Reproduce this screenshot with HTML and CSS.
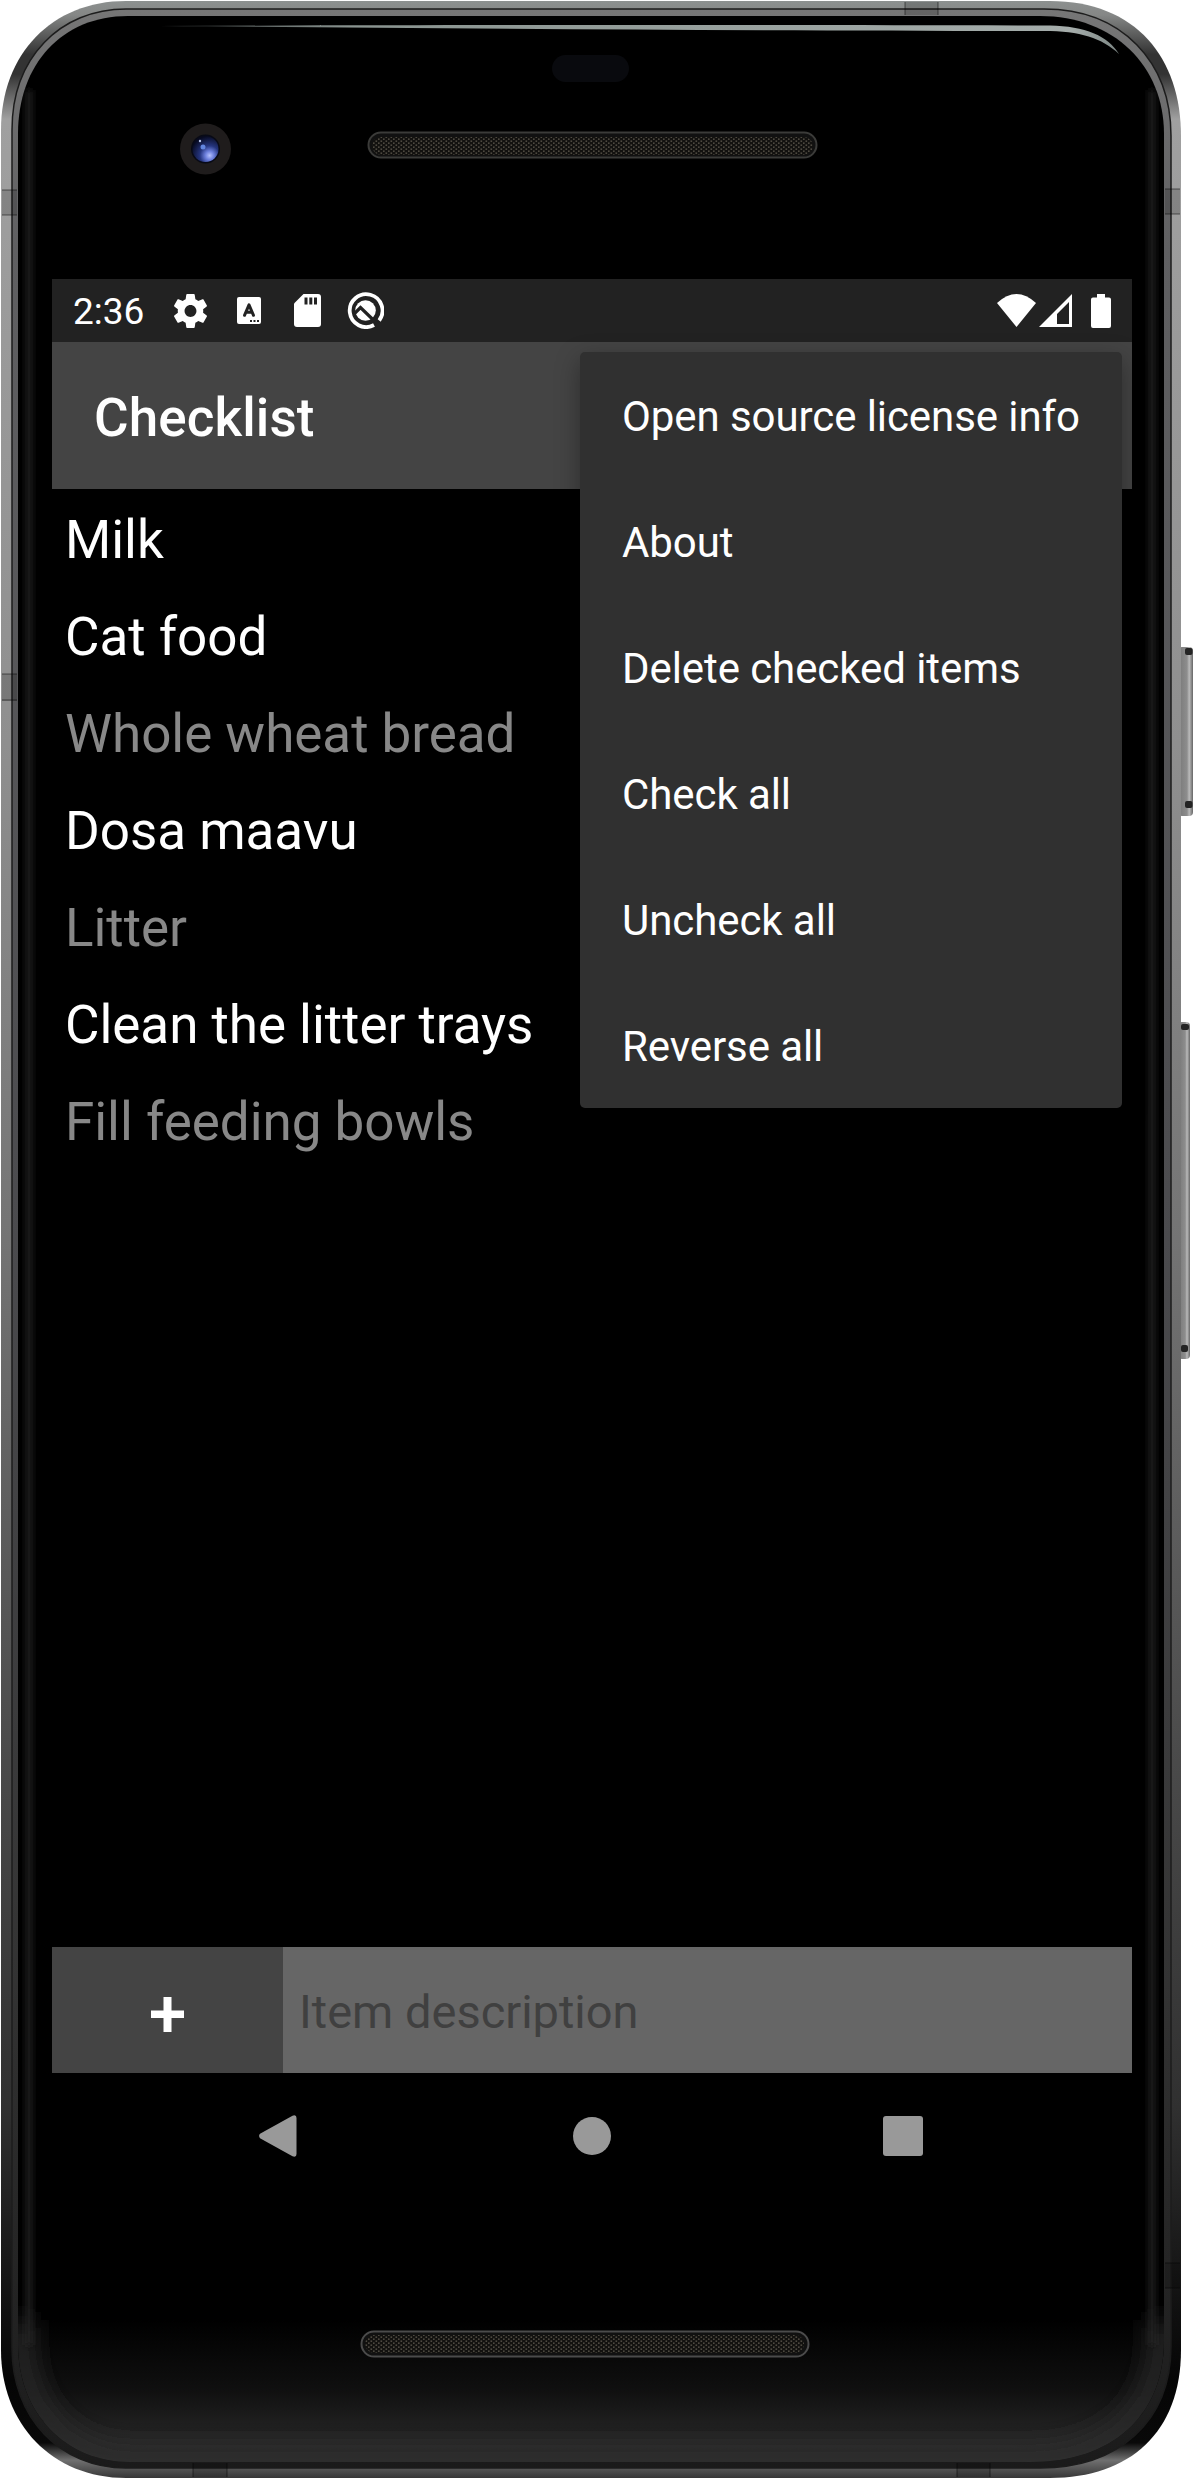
FILE: index.html
```html
<!DOCTYPE html>
<html lang="en">
<head>
<meta charset="utf-8">
<title>Checklist</title>
<link rel="stylesheet" href="styles.css">
</head>
<body>
<div class="stage">
  <svg class="device" width="1194" height="2480" viewBox="0 0 1194 2480" aria-hidden="true">
    <defs>
      <linearGradient id="rim" gradientUnits="userSpaceOnUse" x1="0" y1="0" x2="0" y2="2480">
        <stop offset="0" stop-color="#8d9190"/><stop offset=".006" stop-color="#858786"/>
        <stop offset=".022" stop-color="#333"/><stop offset=".03" stop-color="#333"/>
        <stop offset=".048" stop-color="#a0a0a0"/><stop offset=".3" stop-color="#8f8f8f"/>
        <stop offset=".5" stop-color="#747474"/><stop offset=".7" stop-color="#4c4c4c"/>
        <stop offset=".85" stop-color="#303030"/><stop offset=".96" stop-color="#050505"/>
        <stop offset=".985" stop-color="#090909"/><stop offset=".992" stop-color="#707070"/>
        <stop offset="1" stop-color="#303030"/>
      </linearGradient>
      <linearGradient id="inner" gradientUnits="userSpaceOnUse" x1="0" y1="0" x2="0" y2="2480">
        <stop offset="0" stop-color="#777"/><stop offset=".1" stop-color="#606062"/>
        <stop offset=".5" stop-color="#4b4b4e"/><stop offset=".8" stop-color="#333"/>
        <stop offset="1" stop-color="#1a1a1a"/>
      </linearGradient>
      <linearGradient id="foot" x1="0" y1="0" x2="0" y2="1">
        <stop offset="0" stop-color="#000"/><stop offset=".5" stop-color="#101010"/>
        <stop offset="1" stop-color="#303030"/>
      </linearGradient>
      <linearGradient id="shine" x1="0" y1="0" x2="1" y2="0">
        <stop offset="0" stop-color="#7b8585" stop-opacity=".5"/><stop offset=".2" stop-color="#89938f"/>
        <stop offset=".95" stop-color="#a5adab"/><stop offset="1" stop-color="#7d8785"/>
      </linearGradient>
      <linearGradient id="key" x1="0" y1="0" x2="1" y2="0">
        <stop offset="0" stop-color="#777"/><stop offset=".6" stop-color="#8d8d8d"/>
        <stop offset=".75" stop-color="#bbb"/><stop offset="1" stop-color="#666"/>
      </linearGradient>
      <radialGradient id="lens" cx=".66" cy=".75" r=".75">
        <stop offset="0" stop-color="#b6c2ff"/><stop offset=".22" stop-color="#6d80dd"/>
        <stop offset=".5" stop-color="#25357f"/><stop offset="1" stop-color="#070a20"/>
      </radialGradient>
      <pattern id="mesh" width="5" height="4" patternUnits="userSpaceOnUse">
        <rect width="5" height="4" fill="#12110f"/>
        <rect x=".5" y=".5" width="1.6" height="1.3" fill="#5b564c"/>
        <rect x="3" y="2.5" width="1.6" height="1.3" fill="#5b564c"/>
      </pattern>
      <clipPath id="glass"><path d="M128 16H1040C1114 16 1164 66 1164 134V2340C1164 2416 1112 2462 1030 2462H130C66 2462 18 2414 18 2344V134C18 64 62 16 128 16Z"/></clipPath>
      <filter id="soft" filterUnits="userSpaceOnUse" x="0" y="60" width="1194" height="2420"><feGaussianBlur stdDeviation="3"/></filter>
      <filter id="glow" filterUnits="userSpaceOnUse" x="0" y="2200" width="1194" height="280"><feGaussianBlur stdDeviation="12"/></filter>
    </defs>

    <rect x="1178" y="647" width="15" height="169" rx="4" fill="url(#key)"/>
    <rect x="1185" y="648" width="7.500" height="7" rx="2" fill="#242424"/>
    <rect x="1185" y="801" width="7.500" height="7" rx="2" fill="#242424"/>
    <rect x="1178" y="1022" width="12" height="337" rx="4" fill="url(#key)"/>
    <rect x="1181" y="1024" width="8" height="6" rx="2" fill="#242424"/>
    <rect x="1181" y="1345" width="7" height="7" rx="2" fill="#242424"/>

    <path d="M126 1H1050C1136 1 1181 58 1181 136V2350C1181 2432 1130 2478 1050 2478H126C52 2478 1 2424 1 2350V130C1 54 52 1 126 1Z" fill="url(#rim)"/>
    <path d="M126 9H1044C1122 9 1171 62 1171 136V2346C1171 2422 1118 2468 1040 2468H126C60 2468 12 2418 12 2348V130C12 58 60 9 126 9Z" fill="url(#inner)" stroke="#1c1c1c" stroke-width="1.500"/>
    <path d="M128 16H1040C1114 16 1164 66 1164 134V2340C1164 2416 1112 2462 1030 2462H130C66 2462 18 2414 18 2344V134C18 64 62 16 128 16Z" fill="#000"/>
    <g clip-path="url(#glass)">
      <rect y="2320" width="1194" height="142" fill="url(#foot)"/>
      <path d="M22 2320V2340C22 2410 70 2458 130 2458H1030C1110 2458 1160 2410 1160 2340V2320" fill="none" stroke="#2c2c2c" stroke-width="22" filter="url(#glow)"/>
      <path d="M29 90V2345M1152 90V2345" fill="none" stroke="#222" stroke-width="6" filter="url(#soft)"/>
    </g>

    <path d="M160 26C500 24.500 800 25 1050 25.500C1085 26 1108 36 1119 54C1102 38 1080 31 1044 31C760 31 400 28 160 26Z" fill="url(#shine)"/>

    <path d="M2 190H17V215H2ZM2 674H17V701H2ZM1165 189H1180V214H1165ZM1165 2263H1180V2288H1165ZM905 2V15H938V2ZM193 2463H227V2477H193ZM957 2463H990V2477H957Z" fill="#000" fill-opacity=".16"/>
    <path d="M2 190H17M2 215H17M2 674H17M2 700H17M1165 189H1180M1165 214H1180M1165 2263H1180M1165 2288H1180M905 2V15M938 2V15M193 2463V2477M227 2463V2477M957 2463V2477M990 2463V2477" stroke="#000" stroke-opacity=".5" fill="none"/>

    <rect x="552" y="55" width="77" height="27" rx="13.500" fill="#090a0e"/>
    <circle cx="205.500" cy="149" r="25.500" fill="#1f1c1c"/>
    <circle cx="205.500" cy="149" r="14.500" fill="#080a16"/>
    <circle cx="205.500" cy="149" r="13" fill="url(#lens)"/>
    <circle cx="203" cy="147" r="2.500" fill="#6386df"/>
    <circle cx="200" cy="141" r="1.200" fill="#b5c2e8"/>

    <rect x="368.500" y="132.500" width="448" height="25" rx="12.500" fill="#111" stroke="#3b3b39" stroke-width="2"/>
    <rect x="372" y="137" width="441" height="18" rx="9" fill="url(#mesh)"/>
    <rect x="361.500" y="2331.500" width="447" height="25" rx="12.500" fill="#111" stroke="#4b4b4b" stroke-width="2"/>
    <rect x="365" y="2335" width="439" height="18" rx="9" fill="url(#mesh)"/>
  </svg>

  <main class="screen">
    <header class="status">
      <time class="clock">2:36</time>
      <div class="notes">
        <svg width="33" height="34" viewBox="2.270 2 19.460 20" preserveAspectRatio="none"><path fill="#fff" d="M19.430 12.980c.04-.32.07-.64.07-.98s-.03-.66-.07-.98l2.110-1.650c.19-.15.24-.42.12-.64l-2-3.460c-.12-.22-.39-.3-.61-.22l-2.490 1c-.52-.4-1.080-.73-1.690-.98l-.38-2.650C14.460 2.180 14.250 2 14 2h-4c-.25 0-.46.18-.49.42l-.38 2.650c-.61.25-1.170.59-1.690.98l-2.490-1c-.23-.09-.49 0-.61.22l-2 3.460c-.13.22-.07.49.12.64l2.110 1.650c-.04.32-.07.65-.07.98s.03.66.07.98l-2.110 1.650c-.19.15-.24.42-.12.64l2 3.460c.12.22.39.3.61.22l2.490-1c.52.4 1.080.73 1.690.98l.38 2.650c.03.24.24.42.49.42h4c.25 0 .46-.18.49-.42l.38-2.650c.61-.25 1.170-.59 1.690-.98l2.490 1c.23.09.49 0 .61-.22l2-3.460c.12-.22.07-.49-.12-.64l-2.110-1.650zM12 15.500c-1.930 0-3.500-1.570-3.500-3.500s1.570-3.500 3.500-3.500 3.500 1.570 3.500 3.500-1.570 3.500-3.500 3.500z"/></svg>
        <svg width="24" height="27" viewBox="0 0 24 27"><rect width="24" height="27" rx="2" fill="#fff"/><path d="M7.500 18.300L12 7.800L16.500 18.300M9 15.200H15" fill="none" stroke="#222" stroke-width="3" stroke-linecap="round" stroke-linejoin="round"/><path d="M13 23h2v2h-2zM16.500 23h2v2h-2zM20 23h2v2h-2z" fill="#222"/></svg>
        <svg width="27" height="33" viewBox="0 0 27 33"><path d="M9.500 0H24Q27 0 27 3V30Q27 33 24 33H3Q0 33 0 30V9.500Z" fill="#fff"/><path d="M10.500 3.500h3v7h-3zM15.300 3.500h3v7h-3zM20 3.500h3v7h-3z" fill="#222"/></svg>
        <svg width="37" height="37" viewBox="0 0 37 37"><path d="M27 33A16.400 16.400 0 1 1 32.200 28.500" fill="none" stroke="#fff" stroke-width="3.800"/><circle cx="18.500" cy="18.500" r="10.300" fill="#fff"/><path d="M7.500 21.500L13.500 15.500L30 31.500" fill="none" stroke="#222" stroke-width="3.200"/></svg>
      </div>
      <div class="signals">
        <svg width="39" height="33" viewBox="0 0 39 33"><path d="M0 9Q19.500 -9 39 9L19.500 33Z" fill="#fff"/></svg>
        <svg class="cell" width="33" height="33" viewBox="0 0 33 33"><path d="M33 0V33H0ZM30 8L18 20V30H30Z" fill="#fff" fill-rule="evenodd"/></svg>
        <svg class="battery" width="20" height="34" viewBox="0 0 20 34"><path d="M6 0H14V3.500H18Q20 3.500 20 5.500V32Q20 34 18 34H2Q0 34 0 32V5.500Q0 3.500 2 3.500H6Z" fill="#fff"/></svg>
      </div>
    </header>
    <header class="toolbar"><h1>Checklist</h1></header>
    <ul class="items">
      <li>Milk</li>
      <li>Cat food</li>
      <li class="checked">Whole wheat bread</li>
      <li>Dosa maavu</li>
      <li class="checked">Litter</li>
      <li>Clean the litter trays</li>
      <li class="checked">Fill feeding bowls</li>
    </ul>
    <form class="entry">
      <button class="add" type="button" aria-label="Add item"><svg width="33" height="35" viewBox="0 0 33 35"><path d="M12.500 0h8v13.500H33v7.500H20.500v14h-8V21H0v-7.500h12.500z" fill="#fff"/></svg></button>
      <div class="field"><span>Item description</span></div>
    </form>
    <nav class="nav">
      <svg width="38" height="42" viewBox="0 0 38 42"><path d="M1 18.800L33.500 .7Q37.500 -.7 37.500 3V39Q37.500 42.700 33.500 41.300L1 23.200Q-.8 21 1 18.800Z" fill="#999"/></svg>
      <svg class="home" width="38" height="40" viewBox="0 0 38 40"><circle cx="19" cy="20" r="19" fill="#999"/></svg>
      <svg width="40" height="40" viewBox="0 0 40 40"><rect width="40" height="40" rx="3" fill="#999"/></svg>
    </nav>
    <ul class="menu">
      <li>Open source license info</li>
      <li>About</li>
      <li>Delete checked items</li>
      <li>Check all</li>
      <li>Uncheck all</li>
      <li>Reverse all</li>
    </ul>
  </main>
</div>
</body>
</html>
```
FILE: styles.css
```css
* { box-sizing: border-box; }
body { margin: 0; background: #fff; font-family: Roboto, "Liberation Sans", sans-serif; }
ul { list-style: none; margin: 0; padding: 0; }
svg { display: block; flex: none; }

.stage { position: relative; width: 1194px; height: 2480px; padding: 279px 62px 0 52px; overflow: hidden; }
.device { position: absolute; inset: 0; }

.screen { position: relative; display: flex; flex-direction: column; width: 1080px; height: 1920px; background: #000; color: #fff; }

.status { display: flex; align-items: center; height: 63px; padding: 0 21px; background: #222; }
.clock { width: 101px; padding-top: 2px; font-size: 37px; }
.notes { display: flex; align-items: center; gap: 30px; }
.notes svg:nth-child(3) { margin-left: 3px; }
.notes svg:nth-child(4) { margin-left: -4px; }
.signals { display: flex; align-items: center; margin-left: auto; }
.cell { margin-left: 3px; }
.battery { margin-left: 19px; }

.toolbar { display: flex; align-items: center; height: 147px; padding: 5px 0 0 42px; background: #444; }
.toolbar h1 { margin: 0; font-size: 53px; font-weight: 500; line-height: 62px; letter-spacing: .1px; }

.items { flex: 1; padding: 3px 13px 0; }
.items li { height: 97px; line-height: 97px; font-size: 53px; letter-spacing: -.04px; white-space: nowrap; }
.items .checked { color: #888; }

.entry { display: flex; height: 126px; margin: 0; }
.add { display: flex; align-items: center; justify-content: center; width: 231px; padding: 8px 0 0; border: 0; background: #444; }
.field { display: flex; flex: 1; align-items: center; padding: 3px 0 0 16px; background: #666; color: #404040; font-size: 47px; }

.nav { display: flex; align-items: center; justify-content: space-between; height: 126px; padding: 0 209px 0 207px; }
.home { margin-left: 3px; }

.menu { position: absolute; top: 73px; left: 528px; width: 542px; border-radius: 5px; background: #303030; box-shadow: 0 8px 24px rgba(0, 0, 0, .35); }
.menu li { height: 126px; padding: 2px 0 0 42px; line-height: 126px; font-size: 42px; letter-spacing: -.08px; white-space: nowrap; }
```
